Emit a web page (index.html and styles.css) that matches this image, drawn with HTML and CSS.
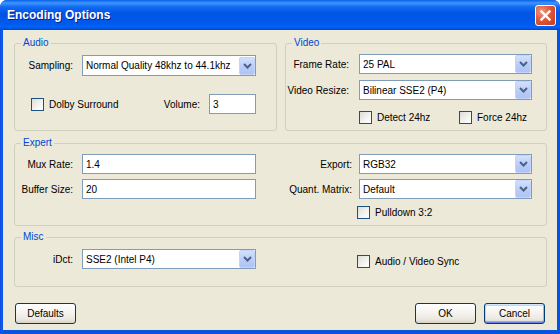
FILE: index.html
```html
<!DOCTYPE html>
<html>
<head>
  <title>Encoding Options</title>
  <link rel="stylesheet" href="styles.css">
</head>
<body>
  <div class="window">
    <div class="titlebar">
      <span class="title">Encoding Options</span>
      <button class="close">
        <svg width="19" height="19" viewBox="0 0 19 19"><path d="M5.5 5.5 L13.5 13.5 M13.5 5.5 L5.5 13.5" stroke="#fff" stroke-width="2.4" stroke-linecap="square"/></svg>
      </button>
    </div>

    <div class="client">
      <div class="top-row">
        <div class="group audio">
          <span class="group-title">Audio</span>
          <div class="row">
            <span class="lbl">Sampling:</span>
            <div class="combo"><span class="val">Normal Quality 48khz to 44.1khz</span><span class="drop"><svg width="9" height="6" viewBox="0 0 9 6"><path d="M1 1 L4.5 4.5 L8 1" fill="none" stroke="#4d6185" stroke-width="2"/></svg></span></div>
          </div>
          <div class="row volume-row">
            <label class="check"><span class="box"></span>Dolby Surround</label>
            <span class="lbl vol-lbl">Volume:</span>
            <div class="edit vol">3</div>
          </div>
        </div>

        <div class="group video">
          <span class="group-title">Video</span>
          <div class="row">
            <span class="lbl">Frame Rate:</span>
            <div class="combo"><span class="val">25 PAL</span><span class="drop"><svg width="9" height="6" viewBox="0 0 9 6"><path d="M1 1 L4.5 4.5 L8 1" fill="none" stroke="#4d6185" stroke-width="2"/></svg></span></div>
          </div>
          <div class="row">
            <span class="lbl">Video Resize:</span>
            <div class="combo"><span class="val">Bilinear SSE2 (P4)</span><span class="drop"><svg width="9" height="6" viewBox="0 0 9 6"><path d="M1 1 L4.5 4.5 L8 1" fill="none" stroke="#4d6185" stroke-width="2"/></svg></span></div>
          </div>
          <div class="checks">
            <label class="check detect"><span class="box"></span>Detect 24hz</label>
            <label class="check"><span class="box"></span>Force 24hz</label>
          </div>
        </div>
      </div>

      <div class="group expert">
        <span class="group-title">Expert</span>
        <div class="cols">
          <div class="col-left">
            <div class="row">
              <span class="lbl">Mux Rate:</span>
              <div class="edit">1.4</div>
            </div>
            <div class="row">
              <span class="lbl">Buffer Size:</span>
              <div class="edit">20</div>
            </div>
          </div>
          <div class="col-right">
            <div class="row">
              <span class="lbl">Export:</span>
              <div class="combo"><span class="val">RGB32</span><span class="drop"><svg width="9" height="6" viewBox="0 0 9 6"><path d="M1 1 L4.5 4.5 L8 1" fill="none" stroke="#4d6185" stroke-width="2"/></svg></span></div>
            </div>
            <div class="row">
              <span class="lbl">Quant. Matrix:</span>
              <div class="combo"><span class="val">Default</span><span class="drop"><svg width="9" height="6" viewBox="0 0 9 6"><path d="M1 1 L4.5 4.5 L8 1" fill="none" stroke="#4d6185" stroke-width="2"/></svg></span></div>
            </div>
            <label class="check right-check pulldown"><span class="box"></span>Pulldown 3:2</label>
          </div>
        </div>
      </div>

      <div class="group misc">
        <span class="group-title">Misc</span>
        <div class="cols">
          <div class="col-left">
            <div class="row">
              <span class="lbl">iDct:</span>
              <div class="combo"><span class="val">SSE2 (Intel P4)</span><span class="drop"><svg width="9" height="6" viewBox="0 0 9 6"><path d="M1 1 L4.5 4.5 L8 1" fill="none" stroke="#4d6185" stroke-width="2"/></svg></span></div>
            </div>
          </div>
          <div class="col-right">
            <label class="check right-check sync"><span class="box"></span>Audio / Video Sync</label>
          </div>
        </div>
      </div>

      <div class="buttons">
        <button class="btn defaults">Defaults</button>
        <button class="btn ok">OK</button>
        <button class="btn cancel">Cancel</button>
      </div>
    </div>
  </div>
</body>
</html>
```

FILE: styles.css
```css
* {
  margin: 0;
  padding: 0;
  box-sizing: border-box;
}

body {
  width: 560px;
  height: 334px;
  background: #fff;
  font-family: "Liberation Sans", Arial, sans-serif;
  font-size: 10px;
  color: #000;
  overflow: hidden;
}

.window {
  width: 560px;
  height: 334px;
  display: flex;
  flex-direction: column;
  border-radius: 7px 7px 0 0;
  overflow: hidden;
  background: linear-gradient(to right, #0831d9 0, #166aee 1px, #0855dd 2px, #0855dd 100%);
}

.titlebar {
  height: 30px;
  flex: none;
  display: flex;
  align-items: center;
  justify-content: space-between;
  padding: 0 4px 0 7px;
  background: linear-gradient(#0a5fe8 0, #3d95ff 3px, #1169f2 7px, #0055e5 45%, #005aed 80%, #0063f7 90%, #0046d0 100%);
}

.title {
  color: #fff;
  font-weight: bold;
  font-size: 12px;
  text-shadow: 1px 1px #0a1e8a;
}

.close {
  width: 21px;
  height: 21px;
  border: 1px solid #fff;
  border-radius: 3px;
  background: radial-gradient(circle at 30% 30%, #ee9b83 0, #e0573a 45%, #c63a1c 100%);
  display: flex;
  align-items: center;
  justify-content: center;
}

.client {
  flex: 1;
  margin: 0 3px 4px;
  background: #ece9d8;
  padding: 13px 10px 0 11px;
}

.top-row {
  display: flex;
  gap: 8px;
  height: 88px;
}

/* group boxes */
.group {
  position: relative;
  border: 1px solid #d0d0bf;
  border-radius: 3px;
}

.group-title {
  position: absolute;
  top: -7px;
  left: 6px;
  padding: 0 2px;
  line-height: 12px;
  background: #ece9d8;
  color: #0046d5;
}

.row {
  display: flex;
  align-items: center;
  height: 20px;
}

.lbl {
  flex: none;
  text-align: right;
  white-space: nowrap;
}

/* controls */
.combo {
  flex: none;
  display: flex;
  align-items: center;
  height: 20px;
  border: 1px solid #7f9db9;
  background: #fff;
  padding-left: 3px;
}

.combo .val {
  flex: 1;
  white-space: nowrap;
}

.drop {
  width: 16px;
  height: 18px;
  border: 1px solid #c3d3fd;
  border-radius: 2px;
  background: linear-gradient(#d2e0fd, #b7cbf7 60%, #aec4f5);
  display: flex;
  align-items: center;
  justify-content: center;
}

.edit {
  flex: none;
  display: flex;
  align-items: center;
  height: 20px;
  border: 1px solid #7f9db9;
  background: #fff;
  padding-left: 3px;
}

.check {
  display: flex;
  align-items: center;
  white-space: nowrap;
}

.box {
  width: 13px;
  height: 13px;
  margin-right: 5px;
  border: 1px solid #1c5180;
  background: linear-gradient(135deg, #dcdcd7, #f4f4f1 60%, #fff);
}

/* audio */
.audio {
  width: 263px;
  padding: 11px 20px 0 0;
}

.audio .row:first-of-type {
  height: 21px;
}

.audio .combo {
  width: 174px;
  height: 21px;
}

.audio .lbl {
  width: 58px;
  margin-right: 9px;
}

.volume-row {
  margin-top: 18px;
  padding-left: 16px;
}

.audio .vol-lbl {
  width: auto;
  margin-left: auto;
}

.vol {
  width: 47px;
}

/* video */
.video {
  width: 262px;
  padding: 10px 14px 0 0;
}

.video .row + .row {
  margin-top: 6px;
}

.video .lbl {
  width: 63px;
  margin-right: 10px;
}

.video .combo {
  width: 173px;
}

.checks {
  display: flex;
  margin-top: 11px;
  padding-left: 73px;
}

.detect {
  width: 100px;
}

/* expert + misc */
.expert {
  height: 83px;
  margin-top: 12px;
  padding-top: 10px;
}

.misc {
  height: 50px;
  margin-top: 11px;
  padding-top: 11px;
}

.cols {
  display: flex;
}

.col-left .lbl {
  width: 58px;
  margin-right: 9px;
}

.col-left .edit,
.col-left .combo {
  width: 174px;
}

.col-left .row + .row,
.col-right .row + .row {
  margin-top: 5px;
}

.col-right {
  width: 274px;
  margin-left: auto;
  padding-right: 14px;
}

.col-right .lbl {
  width: 80px;
  margin-right: 7px;
}

.col-right .combo {
  width: 173px;
}

.right-check {
  padding-left: 85px;
}

.pulldown {
  margin-top: 7px;
}

.sync {
  margin-top: 6px;
}

/* buttons */
.buttons {
  display: flex;
  margin-top: 16px;
  padding: 0 2px 0 1px;
}

.btn {
  width: 61px;
  height: 21px;
  border: 1px solid #003c74;
  border-radius: 3px;
  background: linear-gradient(#fff 0, #f6f5f1 40%, #ebe8df 80%, #d8d2c6 100%);
  font: inherit;
  color: #000;
}

.ok {
  margin-left: auto;
}

.cancel {
  margin-left: 8px;
  box-shadow: inset 0 1px #cee7ff, inset 0 -1px #6982ee, inset 1px 0 #b9d1fb, inset -1px 0 #9db9eb, inset 0 2px #bcd4f6, inset 0 -2px #89ade4;
}
```
